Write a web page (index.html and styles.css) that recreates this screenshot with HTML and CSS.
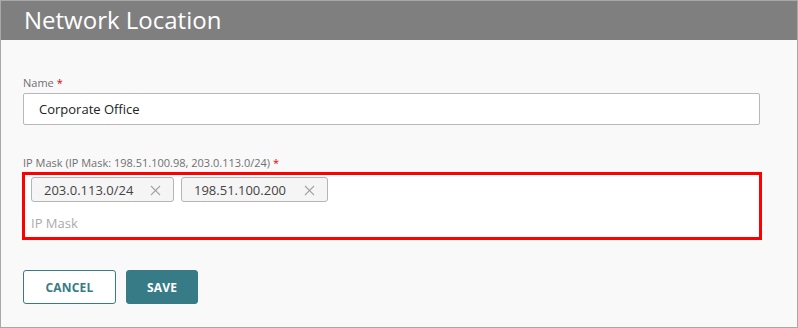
FILE: index.html
```html
<!DOCTYPE html>
<html>
<head>
<meta charset="utf-8">
<link rel="stylesheet" href="styles.css">
</head>
<body>
<div class="dialog">
  <div class="header"><h1 class="title">Network Location</h1></div>
  <div class="content">
    <div class="field field-name">
      <label class="label">Name <span class="req">*</span></label>
      <div class="input">Corporate Office</div>
    </div>
    <div class="field field-ip">
      <label class="label">IP Mask (IP Mask: 198.51.100.98, 203.0.113.0/24) <span class="req">*</span></label>
      <div class="tagbox">
        <div class="chips">
          <span class="chip chip1"><span class="chip-text">203.0.113.0/24</span><svg class="chip-x" width="11" height="11" viewBox="0 0 11 11"><path d="M1 1L10 10M10 1L1 10" stroke="#a3a3a3" stroke-width="1.1" fill="none"/></svg></span>
          <span class="chip chip2"><span class="chip-text">198.51.100.200</span><svg class="chip-x" width="11" height="11" viewBox="0 0 11 11"><path d="M1 1L10 10M10 1L1 10" stroke="#a3a3a3" stroke-width="1.1" fill="none"/></svg></span>
        </div>
        <div class="placeholder">IP Mask</div>
      </div>
    </div>
    <div class="actions">
      <button class="btn btn-cancel">CANCEL</button>
      <button class="btn btn-save">SAVE</button>
    </div>
  </div>
</div>
</body>
</html>
```
FILE: styles.css
```css
html, body { margin: 0; padding: 0; }
body { font-family: "Open Sans", "Noto Sans", sans-serif; background: #f9f9f9; }
.dialog {
  width: 798px; height: 328px; box-sizing: border-box;
  border: 1px solid #a8a8a8; background: #f9f9f9;
  display: flex; flex-direction: column;
}
.header {
  height: 39px; background: #7f7f7f; display: flex; align-items: center;
  padding-left: 23px;
}
.title { margin: 0; font-weight: 400; font-size: 24px; color: #fff; line-height: 1; position: relative; top: -1px; }
.content { padding: 36px 36px 0 21px; display: flex; flex-direction: column; }
.field { display: flex; flex-direction: column; }
.label { font-size: 11px; color: #707070; line-height: 14px; margin: 0 0 3px 1px; }
.req { color: #e00000; }
.input {
  height: 32px; box-sizing: border-box; margin-left: 1px; width: 737px;
  border: 1px solid #b8b8b8; border-radius: 2px; background: #fff;
  font-size: 13px; color: #222; padding-left: 15px; display: flex; align-items: center;
}
.field-ip { margin-top: 31px; }
.field-ip .label { margin-bottom: 2px; }
.tagbox {
  width: 740px; height: 68px; box-sizing: border-box;
  border: 3px solid #ff0000; background: #fff; padding: 2px 0 0 6px;
}
.chips { display: flex; gap: 7px; }
.chip {
  height: 25px; box-sizing: border-box; border: 1px solid #b5b5b5; border-radius: 3px;
  background: #f5f5f5; display: flex; align-items: center; padding: 1px 12px 0 12px;
  font-size: 13px; color: #444; justify-content: space-between;
}
.chip1 { width: 143px; }
.chip2 { width: 147px; }
.chip-x { display: block; }
.placeholder { font-size: 13px; color: #aaa; margin: 12px 0 0 0; }
.actions { display: flex; gap: 10px; margin-top: 30px; margin-left: 1px; }
.btn {
  height: 34px; box-sizing: border-box; border-radius: 3px; font-family: inherit;
  font-size: 12px; font-weight: 700; letter-spacing: 0.2px; cursor: pointer;
}
.btn-cancel { width: 93px; background: #fff; border: 1px solid #367b85; color: #367b85; }
.btn-save { width: 72px; background: #367b85; border: 1px solid #367b85; color: #fff; }
```
